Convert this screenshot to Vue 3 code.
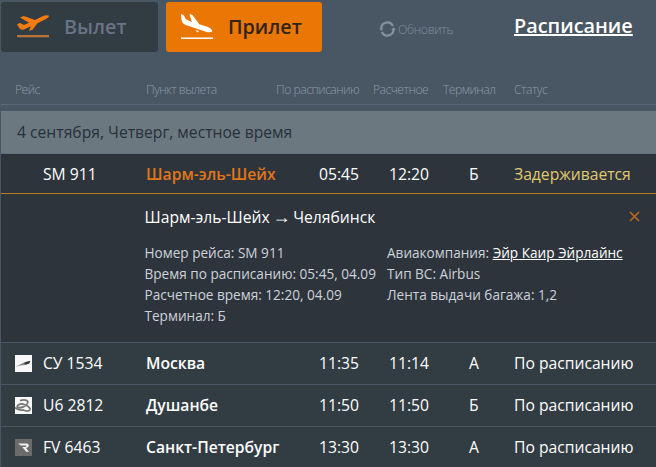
<script setup>
const headers = ['Рейс', 'Пункт вылета', 'По расписанию', 'Расчетное', 'Терминал', 'Статус']
const flights = [
  { code: 'СУ 1534', city: 'Москва', planned: '11:35', expected: '11:14', terminal: 'А', logo: 'swift' },
  { code: 'U6 2812', city: 'Душанбе', planned: '11:50', expected: '11:50', terminal: 'Б', logo: 'loop' },
  { code: 'FV 6463', city: 'Санкт-Петербург', planned: '13:30', expected: '13:30', terminal: 'А', logo: 'r' },
]
</script>

<template>
  <main class="board">
    <header class="top">
      <button class="tab departure">
        <svg class="plane" width="34" height="24" viewBox="0 0 34 24">
          <path d="M1 9.2 4 8.1 8 10 13 7.8 4 2.5 7.8 1.1 19 4.9 26.5 1.2Q30-.3 33 .6 33.6 2 30.3 3.7L21.5 8.2 16.5 14.8 13 16.1 14.8 11.2 8 14.4Q5.4 15.3 3.6 13.4Z" />
          <rect class="runway" x="1" y="20" width="32" height="2.3" />
        </svg>
        <span>Вылет</span>
      </button>
      <button class="tab arrival">
        <svg class="plane" width="34" height="26" viewBox="0 0 34 26">
          <path d="M1 0 3.8 1.3 5.8 5.3 12 8 9.4 0 12.5 1 19.3 10.2 27.3 12.8Q32 14.5 32.3 17.5 30 19 26 17.8L6.4 11.2Q2 9.8 1.5 6Z" />
          <path d="M15.5 16 19 17 17.5 18.4Z" />
          <rect x="1" y="23.5" width="32" height="1.5" />
        </svg>
        <span>Прилет</span>
      </button>
      <button class="refresh">
        <svg width="17" height="16" viewBox="0 0 17 16" fill="none" stroke="#84919c" stroke-width="2.2">
          <path d="M2.2 7.5A6.2 6.2 0 0 1 14 5" />
          <path d="M14.6 8.5A6.2 6.2 0 0 1 2.8 11" />
          <path d="M0 7.3 4.5 7.3 2.1 10ZM12.3 9 16.8 9 14.6 6Z" fill="#84919c" stroke="none" />
        </svg>
        <span>Обновить</span>
      </button>
      <a class="schedule">Расписание</a>
    </header>

    <div class="columns">
      <span v-for="h in headers" :key="h">{{ h }}</span>
    </div>
    <div class="date">4 сентября, Четверг, местное время</div>

    <section class="expanded">
      <div class="row active">
        <span></span>
        <span class="code">SM 911</span>
        <span class="city">Шарм-эль-Шейх</span>
        <span class="time">05:45</span>
        <span class="time">12:20</span>
        <span class="terminal">Б</span>
        <span class="status late">Задерживается</span>
      </div>
      <div class="details">
        <div class="route">
          <span class="title">Шарм-эль-Шейх <span class="arrow">→</span> Челябинск</span>
          <svg class="close" width="11" height="11" viewBox="0 0 11 11"><path d="M1 1 10 10M10 1 1 10" stroke="#b9691f" stroke-width="1.7" /></svg>
        </div>
        <div class="facts">
          <div>
            <p>Номер рейса: SM 911</p>
            <p>Время по расписанию: 05:45, 04.09</p>
            <p>Расчетное время: 12:20, 04.09</p>
            <p>Терминал: Б</p>
          </div>
          <div>
            <p>Авиакомпания: <a>Эйр Каир Эйрлайнс</a></p>
            <p>Тип ВС: Airbus</p>
            <p>Лента выдачи багажа: 1,2</p>
          </div>
        </div>
      </div>
    </section>

    <div v-for="f in flights" :key="f.code" class="row">
      <svg class="logo" width="17" height="17" viewBox="0 0 17 17">
        <rect width="17" height="17" :fill="f.logo === 'r' ? '#6b6b6b' : '#f8f8f8'" />
        <template v-if="f.logo === 'swift'">
          <path d="M0 12 6 9 10 7 15.5 5.8 14.5 8.6 10 10 5 10.4Z" fill="#858585" />
          <path d="M9 8.2 12 6.8 15.3 6.1 14 8.6 10.5 9.4Z" fill="#333" />
        </template>
        <g v-else-if="f.logo === 'loop'" fill="none" stroke="#777" stroke-width="1.8">
          <path d="M5 3.6C9 2.2 13.2 2.8 12.8 5.6 12 9 6.5 11.4 2.6 10.6 1 9 4.5 6.2 8 7 12 8.2 15.6 10.6 15 12.6 14 14.4 10.5 14 8 13" />
          <path d="M0 10.5C2 12.6 5 13.2 9 13.2" />
        </g>
        <path v-else d="M3.3 4.5H11.5Q14.5 5 13.6 7.2 13 8.6 11 9L14 12.7H11.3L7.2 8.1H10.5Q11.6 7.7 11.3 6.6H5.5Z" fill="#eee" />
      </svg>
      <span class="code">{{ f.code }}</span>
      <span class="city">{{ f.city }}</span>
      <span class="time">{{ f.planned }}</span>
      <span class="time">{{ f.expected }}</span>
      <span class="terminal">{{ f.terminal }}</span>
      <span class="status">По расписанию</span>
    </div>
  </main>
</template>

<style>
body { margin: 0; background: #495663; overflow: hidden; }
</style>

<style scoped>
.board {
  box-sizing: border-box;
  width: 656px;
  height: 467px;
  overflow: hidden;
  padding: 2px 0 0 1px;
  background: #495663;
  color: #fff;
  font-family: "Open Sans", "Noto Sans", sans-serif;
  font-size: 15.68px;
  white-space: nowrap;
}
button { border: 0; padding: 0; margin: 0; background: none; font: inherit; color: inherit; }
.top { display: flex; height: 50px; }
.tab {
  display: flex;
  align-items: center;
  box-sizing: border-box;
  width: 157px;
  height: 50px;
  padding: 0 0 1px 15px;
  border-radius: 3px;
  font-size: 19.75px;
  font-weight: 600;
}
.tab span { margin-left: 14px; }
.departure { background: #323c43; color: #687386; }
.departure .plane { fill: #f47b10; }
.departure .runway { fill: #b8733a; }
.arrival { width: 156px; background: #ea7704; color: #30241b; margin-left: 8px; padding-left: 14px; }
.arrival .plane { fill: #fff; }
.refresh { display: flex; align-items: center; margin-left: 57px; width: 76px; padding-top: 4px; color: #8290a1; font-size: 12.2px; letter-spacing: -0.3px; font-weight: 300; }
.refresh span { margin-left: 2px; }
.schedule { margin: 10px 0 0 59px; font-size: 19.85px; line-height: 28px; font-weight: 600; text-decoration: underline; text-decoration-thickness: 2px; }
.columns {
  display: grid;
  grid-template-columns: 131px 130px 97px 70px 71px 1fr;
  box-sizing: border-box;
  height: 53px;
  padding: 29px 0 0 14px;
  border-bottom: 1px solid #5b6875;
  color: #8d9aaa;
  font-size: 12.2px;
  letter-spacing: -0.52px;
  font-weight: 300;
  line-height: 18px;
}
.date {
  box-sizing: border-box;
  height: 43px;
  margin-top: 6px;
  padding-left: 16px;
  background: #6c7880;
  border-bottom: 1px solid #63717c;
  color: #273139;
  line-height: 42px;
}
.row {
  display: grid;
  grid-template-columns: 28px 103px 173px 70px 80px 45px 1fr;
  align-items: center;
  box-sizing: border-box;
  height: 42px;
  padding: 0 0 1px 14px;
  background: #323c43;
  border-top: 1px solid #495663;
}
.row.active { height: 40px; padding-bottom: 0; background: #2d343c; border-top: 0; border-bottom: 1px solid #b97d28; }
.logo { display: block; }
.city { font-weight: 600; }
.active .city { color: #e17718; }
.late { color: #e0c970; }
.details { box-sizing: border-box; height: 148px; padding: 11px 0 0 143.5px; background: #2d343c; }
.route { display: flex; justify-content: space-between; align-items: center; height: 23px; padding-right: 16px; }
.arrow { margin: 0 -1.3px; font-family: "Liberation Sans", sans-serif; font-size: 18px; line-height: 1; }
.facts { display: grid; grid-template-columns: 242.5px 1fr; margin-top: 14px; color: #cdd2da; font-size: 13.6px; line-height: 21px; }
.facts p { margin: 0; }
.facts a { color: #fff; text-decoration: underline; }
</style>
